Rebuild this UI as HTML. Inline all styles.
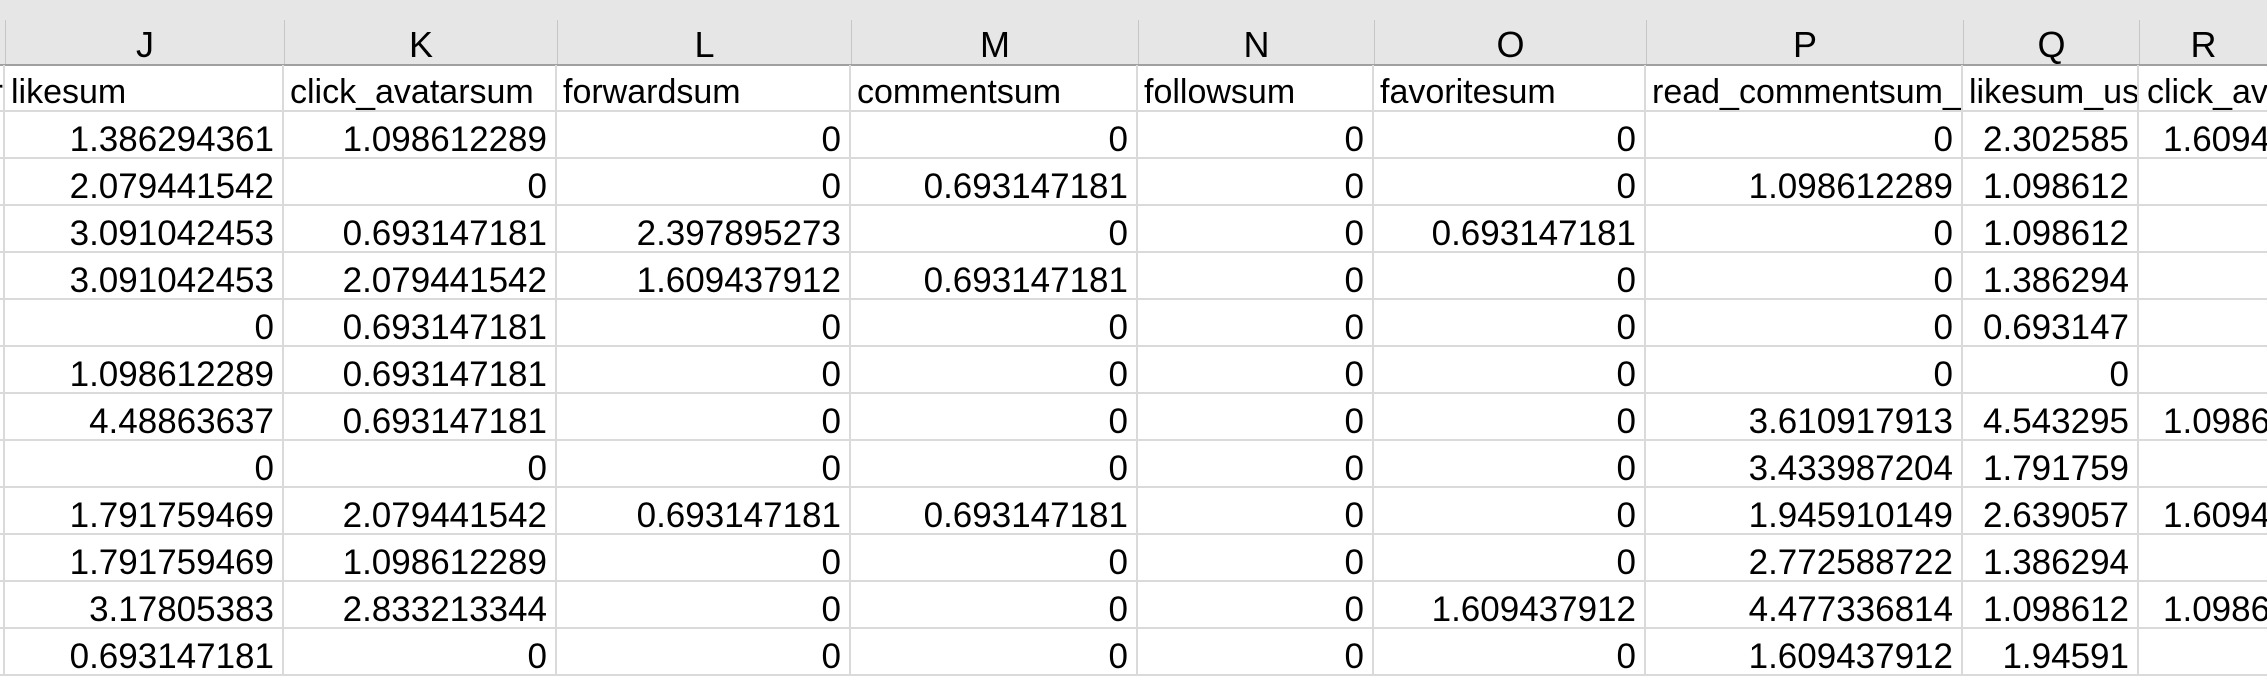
<!DOCTYPE html>
<html><head><meta charset="utf-8"><style>
*{box-sizing:border-box;margin:0;padding:0}
body{width:2267px;height:661px;overflow:hidden;background:#fff;font-family:"Liberation Sans",Arial,sans-serif;color:#000;position:relative}
.hdr{position:absolute;left:0;top:0;width:2267px;height:66px;background:#e6e6e6;border-bottom:2px solid #a0a0a0}
.hdr .c{position:absolute;top:20px;height:44px;border-left:1px solid #c6c6c6;text-align:center;font-size:36px;line-height:44px;padding-top:3px}
.row{position:absolute;left:0;width:2267px;height:47px;border-bottom:2px solid #dadada;display:flex}
.row div{height:45px;border-right:2px solid #dadada;font-size:35px;line-height:45px;white-space:nowrap;overflow:hidden;text-align:right;padding-right:8px;padding-top:5px;flex:none}
.row div:nth-child(1){width:5px;padding-right:0}
.row div:nth-child(2){width:279px}
.row div:nth-child(3){width:273px}
.row div:nth-child(4){width:294px}
.row div:nth-child(5){width:287px}
.row div:nth-child(6){width:236px}
.row div:nth-child(7){width:272px}
.row div:nth-child(8){width:317px}
.row div:nth-child(9){width:176px}
.row div:nth-child(10){width:128px;text-align:left;padding-left:24px;padding-right:0;border-right:none}
.row.h div{text-align:left;padding-left:6px;padding-right:0;font-size:34px}
.row.h div:nth-child(1){padding-left:0;text-align:right;direction:rtl}
.row.h div:nth-child(10){padding-left:8px}
</style></head><body>
<div class="hdr">
<div class="c" style="left:5px;width:279px">J</div>
<div class="c" style="left:284px;width:273px">K</div>
<div class="c" style="left:557px;width:294px">L</div>
<div class="c" style="left:851px;width:287px">M</div>
<div class="c" style="left:1138px;width:236px">N</div>
<div class="c" style="left:1374px;width:272px">O</div>
<div class="c" style="left:1646px;width:317px">P</div>
<div class="c" style="left:1963px;width:176px">Q</div>
<div class="c" style="left:2139px;width:128px">R</div>
</div>
<div class="row h" style="top:65px"><div>r</div><div>likesum</div><div>click_avatarsum</div><div>forwardsum</div><div>commentsum</div><div>followsum</div><div>favoritesum</div><div>read_commentsum_</div><div>likesum_us</div><div>click_ava</div></div>
<div class="row" style="top:112px"><div></div><div>1.386294361</div><div>1.098612289</div><div>0</div><div>0</div><div>0</div><div>0</div><div>0</div><div>2.302585</div><div>1.609437912</div></div>
<div class="row" style="top:159px"><div></div><div>2.079441542</div><div>0</div><div>0</div><div>0.693147181</div><div>0</div><div>0</div><div>1.098612289</div><div>1.098612</div><div></div></div>
<div class="row" style="top:206px"><div></div><div>3.091042453</div><div>0.693147181</div><div>2.397895273</div><div>0</div><div>0</div><div>0.693147181</div><div>0</div><div>1.098612</div><div></div></div>
<div class="row" style="top:253px"><div></div><div>3.091042453</div><div>2.079441542</div><div>1.609437912</div><div>0.693147181</div><div>0</div><div>0</div><div>0</div><div>1.386294</div><div></div></div>
<div class="row" style="top:300px"><div></div><div>0</div><div>0.693147181</div><div>0</div><div>0</div><div>0</div><div>0</div><div>0</div><div>0.693147</div><div></div></div>
<div class="row" style="top:347px"><div></div><div>1.098612289</div><div>0.693147181</div><div>0</div><div>0</div><div>0</div><div>0</div><div>0</div><div>0</div><div></div></div>
<div class="row" style="top:394px"><div></div><div>4.48863637</div><div>0.693147181</div><div>0</div><div>0</div><div>0</div><div>0</div><div>3.610917913</div><div>4.543295</div><div>1.098612289</div></div>
<div class="row" style="top:441px"><div></div><div>0</div><div>0</div><div>0</div><div>0</div><div>0</div><div>0</div><div>3.433987204</div><div>1.791759</div><div></div></div>
<div class="row" style="top:488px"><div></div><div>1.791759469</div><div>2.079441542</div><div>0.693147181</div><div>0.693147181</div><div>0</div><div>0</div><div>1.945910149</div><div>2.639057</div><div>1.609437912</div></div>
<div class="row" style="top:535px"><div></div><div>1.791759469</div><div>1.098612289</div><div>0</div><div>0</div><div>0</div><div>0</div><div>2.772588722</div><div>1.386294</div><div></div></div>
<div class="row" style="top:582px"><div></div><div>3.17805383</div><div>2.833213344</div><div>0</div><div>0</div><div>0</div><div>1.609437912</div><div>4.477336814</div><div>1.098612</div><div>1.098612289</div></div>
<div class="row" style="top:629px"><div></div><div>0.693147181</div><div>0</div><div>0</div><div>0</div><div>0</div><div>0</div><div>1.609437912</div><div>1.94591</div><div></div></div>
</body></html>
